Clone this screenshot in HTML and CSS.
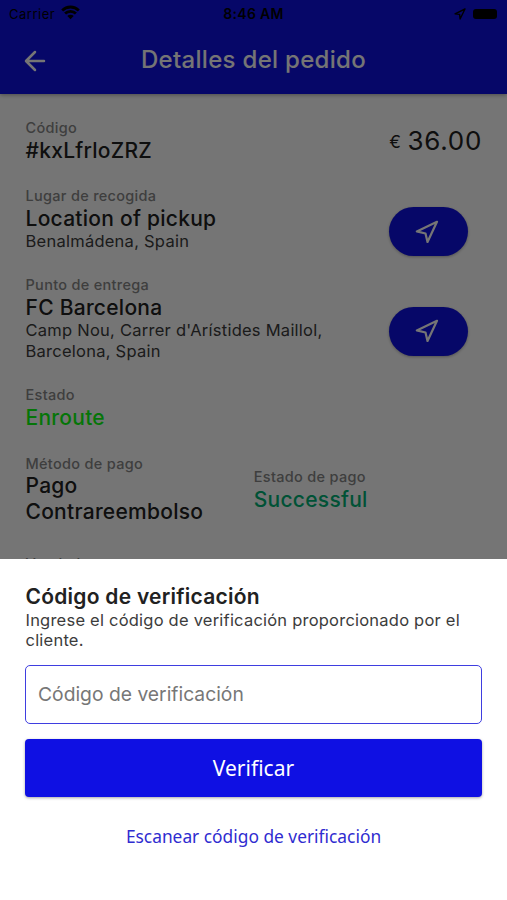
FILE: index.html
```html
<!DOCTYPE html>
<html lang="es">
<head>
<meta charset="utf-8">
<title>Detalles del pedido</title>
<link rel="stylesheet" href="styles.css">
</head>
<body>
<div class="page">
  <header class="header">
    <div class="status">
      <div class="status-left"><span class="carrier">Carrier</span>
        <svg width="19" height="15" viewBox="0 0 19 15" fill="none" stroke="#000" stroke-width="2.8"><path d="M1.2 5.4a11.8 11.8 0 0 1 16.6 0M4.1 8.6a7.6 7.6 0 0 1 10.8 0"/><path d="M6.3 11a4.5 4.5 0 0 1 6.4 0L9.5 14.2z" fill="#000" stroke="none"/></svg>
      </div>
      <span class="clock">8:46 AM</span>
      <div class="status-right">
        <svg width="12" height="12" viewBox="0 0 12 12" fill="none" stroke="#000" stroke-width="1.4" stroke-linejoin="round"><path d="M11 1L1 5.8l4.6.6.5 4.6z"/></svg>
        <i class="battery"></i>
      </div>
    </div>
    <div class="bar">
      <svg class="back" width="22" height="22" viewBox="0 0 22 22" fill="none" stroke="#fff" stroke-width="2.5" stroke-linecap="round" stroke-linejoin="round"><path d="M11 2L2 11 11 20M2.5 11H20"/></svg>
      <h1 class="bar-title">Detalles del pedido</h1>
    </div>
  </header>
  <main class="details">
    <section class="row">
      <div><p class="caption">Código</p><p class="value">#kxLfrloZRZ</p></div>
      <p class="price"><span class="euro">€</span>36.00</p>
    </section>
    <section class="row">
      <div><p class="caption">Lugar de recogida</p><p class="value">Location of pickup</p><p class="sub">Benalmádena, Spain</p></div>
      <button class="nav nav-pickup"><svg width="24" height="24" viewBox="0 0 24 24" fill="none" stroke="#fff" stroke-width="2.2" stroke-linejoin="round"><path d="M22 1.8L1.8 11.4l8.7 2.1 2 8.5z"/></svg></button>
    </section>
    <section class="row">
      <div><p class="caption">Punto de entrega</p><p class="value">FC Barcelona</p><p class="sub">Camp Nou, Carrer d'Arístides Maillol,<br>Barcelona, Spain</p></div>
      <button class="nav nav-dropoff"><svg width="24" height="24" viewBox="0 0 24 24" fill="none" stroke="#fff" stroke-width="2.2" stroke-linejoin="round"><path d="M22 1.8L1.8 11.4l8.7 2.1 2 8.5z"/></svg></button>
    </section>
    <section class="row">
      <div><p class="caption">Estado</p><p class="value enroute">Enroute</p></div>
    </section>
    <section class="row split">
      <div><p class="caption">Método de pago</p><p class="value">Pago<br>Contrareembolso</p></div>
      <div class="payment"><p class="caption">Estado de pago</p><p class="value success">Successful</p></div>
    </section>
    <section class="row seller">
      <div><p class="caption">Vendedor</p></div>
    </section>
  </main>
</div>
<div class="scrim">
  <div class="sheet">
    <h2 class="sheet-title">Código de verificación</h2>
    <p class="sheet-text">Ingrese el código de verificación proporcionado por el cliente.</p>
    <input class="field" type="text" placeholder="Código de verificación">
    <button class="verify">Verificar</button>
    <a class="scan">Escanear código de verificación</a>
  </div>
</div>
</body>
</html>
```
FILE: styles.css
```css
* { box-sizing: border-box; margin: 0; padding: 0; }
body { height: 900px; overflow: hidden; font-family: Inter, "Liberation Sans", sans-serif; background: #fff; color: #212121; }
button { border: 0; font: inherit; }
.page { height: 900px; overflow: hidden; }
.header { height: 94px; background: #0f10e3; box-shadow: 0 1px 4px rgba(0,0,0,.35); }
.status { height: 27px; display: grid; grid-template-columns: 1fr auto 1fr; align-items: center; padding: 0 10px 0 9px; color: #000; font-size: 13px; }
.status-left, .status-right { display: flex; align-items: center; gap: 6px; }
.status-left svg { margin-top: -3px; }
.status-right { justify-content: flex-end; gap: 7px; }
.carrier { letter-spacing: .5px; }
.clock { font-weight: 600; font-size: 14px; letter-spacing: .3px; margin-left: 1px; }
.battery { width: 24px; height: 10px; border-radius: 3px; background: #000; }
.bar { height: 67px; display: grid; grid-template-columns: 60px 1fr 60px; align-items: center; }
.back { margin-left: 24px; }
.bar-title { color: #fff; font-size: 24px; line-height: 30px; font-weight: 500; text-align: center; letter-spacing: .3px; margin-top: -1px; }
.details { padding: 25px 25px 0 25.5px; display: flex; flex-direction: column; gap: 24.4px; }
.row { display: flex; justify-content: space-between; align-items: center; }
.caption { font-size: 14.5px; line-height: 18.5px; font-weight: 500; color: #888; letter-spacing: .3px; }
.value { font-size: 21px; line-height: 25.5px; font-weight: 500; letter-spacing: .26px; }
.sub { font-size: 16.5px; line-height: 20.7px; color: #3c3c3c; letter-spacing: .25px; }
.price { font-size: 26px; letter-spacing: .7px; margin-bottom: 2px; }
.euro { font-size: 17.5px; margin-right: 6px; vertical-align: 2px; }
.nav { width: 79px; height: 49px; border-radius: 25px; background: #0f10e3; box-shadow: 0 1px 3px rgba(0,0,0,.3); display: flex; align-items: center; justify-content: center; align-self: flex-start; margin-right: 14px; padding-right: 4px; }
.nav-pickup { margin-top: 20px; margin-bottom: -12px; }
.nav-dropoff { margin-top: 30.5px; }
.enroute { color: #0cff12; }
.success { color: #00b377; }
.split { justify-content: flex-start; }
.split > div { flex: 0 0 50%; }
.payment { margin-top: 1.5px; }
.seller { margin-top: 6.5px; }
.scrim { position: fixed; inset: 0; background: rgba(0,0,0,.54); display: flex; align-items: flex-end; }
.sheet { width: 100%; height: 341px; background: #fff; padding: 26px 25px 0; display: flex; flex-direction: column; }
.sheet-title { font-size: 21px; line-height: 24.5px; font-weight: 600; letter-spacing: .25px; padding-left: .5px; }
.sheet-text { font-size: 16.5px; line-height: 20.5px; color: #3c3c3c; letter-spacing: .22px; padding-left: .5px; }
.field { margin-top: 14.5px; height: 59px; flex: none; border: 1px solid #3f3ee0; border-radius: 5px; padding: 0 12px 1px; font: 19.3px Inter, sans-serif; outline: none; }
.field::placeholder { color: #777; opacity: 1; }
.verify { margin-top: 15px; height: 58px; flex: none; border-radius: 4px; background: #0f10e3; color: #fff; font: 21px "Noto Sans", sans-serif; padding-bottom: 1px; box-shadow: 0 1px 3px rgba(0,0,0,.35); }
.scan { margin-top: 27px; text-align: center; color: #2f2cd0; font: 17.35px/24px "Noto Sans", sans-serif; }
```
